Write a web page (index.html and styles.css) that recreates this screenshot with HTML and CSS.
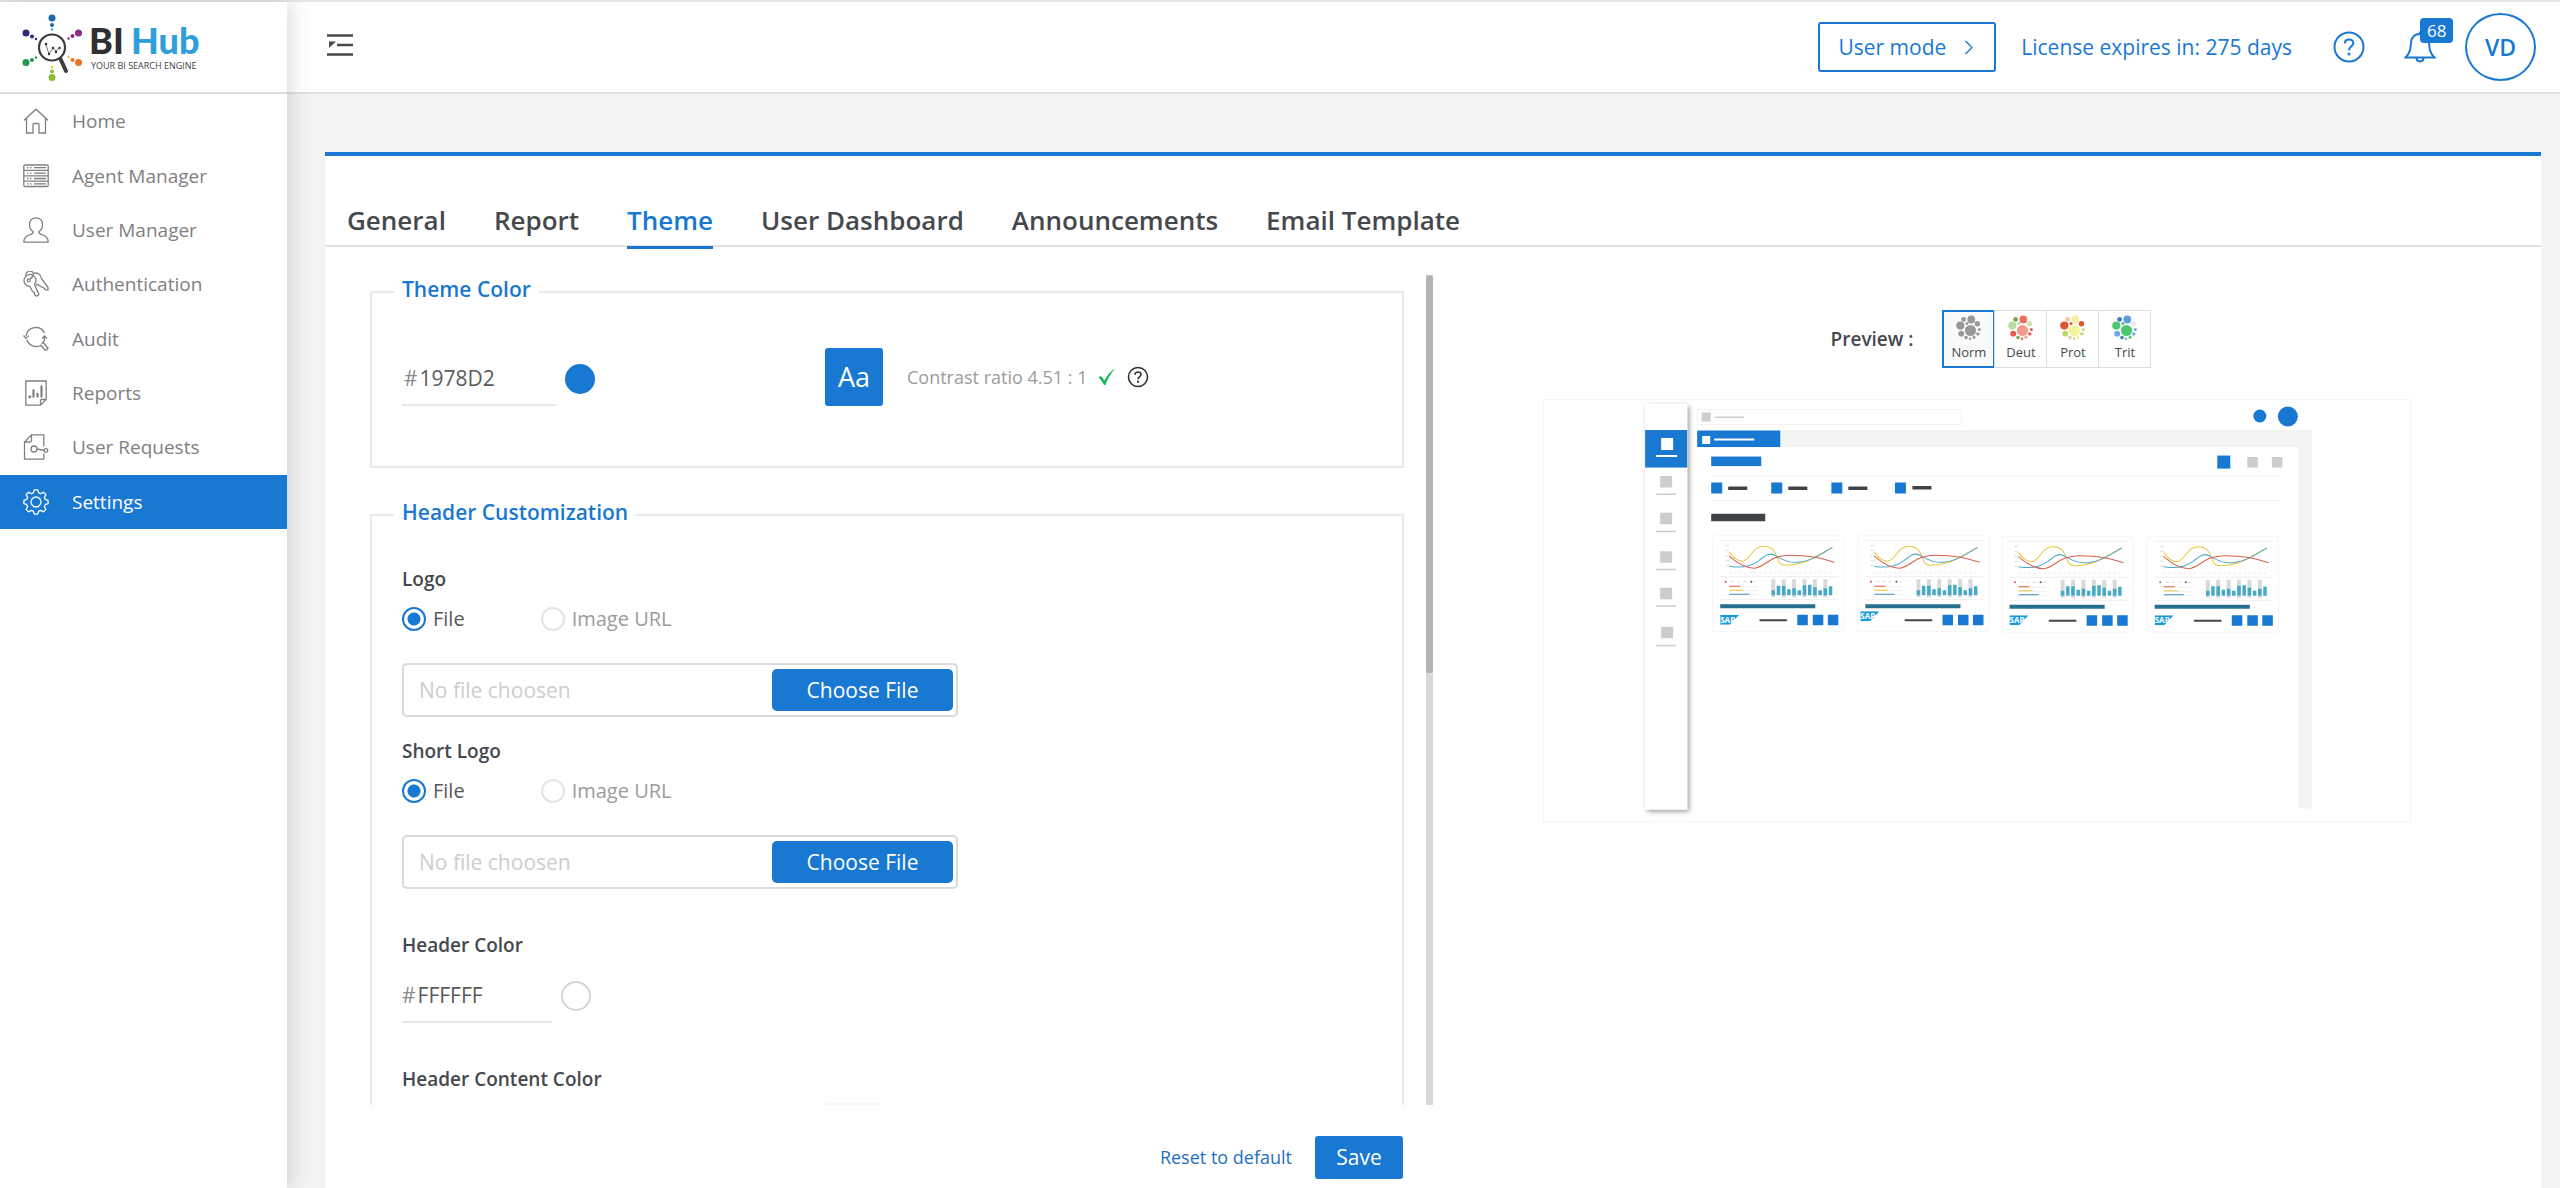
FILE: index.html
```html
<!DOCTYPE html>
<html lang="en">
<head>
<meta charset="utf-8">
<title>BI Hub - Theme settings</title>
<link rel="stylesheet" href="styles.css">
</head>
<body>
<svg class="defs" width="0" height="0" aria-hidden="true">
  <defs>
    <symbol id="dots" viewBox="0 0 26 26">
      <circle cx="14.5" cy="15.5" r="5.6" fill="var(--a)"/>
      <circle cx="15.3" cy="4.5" r="3.9" fill="var(--b)"/>
      <circle cx="7.6" cy="4.4" r="2.4" fill="var(--c)"/>
      <circle cx="4.3" cy="10.6" r="4.1" fill="var(--d)"/>
      <circle cx="5.2" cy="18.7" r="2.9" fill="var(--e)"/>
      <circle cx="11" cy="8.4" r="1.5" fill="var(--d)"/>
      <circle cx="21.4" cy="8.7" r="2.7" fill="var(--f)"/>
      <circle cx="23.4" cy="14.4" r="1.5" fill="var(--e)"/>
      <circle cx="21.8" cy="18.9" r="1.7" fill="var(--e)"/>
      <circle cx="10" cy="22.6" r="1.8" fill="var(--c)"/>
      <circle cx="14" cy="23.7" r="1.2" fill="var(--e)"/>
      <circle cx="18" cy="22.2" r="1.5" fill="var(--a)"/>
    </symbol>
    <symbol id="sap" viewBox="0 0 19 10">
      <path d="M0 0H19L9.500 10H0Z" fill="#1a9bd7"/>
      <text x="0" y="8" class="sap-text">SAP</text>
    </symbol>
    <symbol id="card" viewBox="0 0 132 97">
      <rect x=".5" y=".5" width="131" height="96" rx="2" fill="#fff" stroke="#f3f3f3"/>
      <path d="M8 5.500H126M8 41.500H126M8 64.500H126" stroke="#ededed"/>
      <path d="M13 10.500h4M13 15.500h4M13 20.500h4M13 25.500h4M13 30.500h4" stroke="#ddd"/>
      <path d="M17 37.500H122" stroke="#e6e6e6" stroke-dasharray="2 3"/>
      <g fill="none" stroke-width="1">
        <path d="M17 17C22 23 25 26 30 26C38 26 40 11 51 11C68 11 62 30 72 30C92 30 103 22 120 12" stroke="#e8c63c"/>
        <path d="M17 31C28 33 38 32 46 26C52 21 57 16 64 21C70 24 76 28 86 27C99 26 108 19 120 12.500" stroke="#4aa9c9"/>
        <path d="M17 21C26 29 35 33 42 33C54 32 56 20 78 20C98 20 108 23 122 27" stroke="#d9604b"/>
      </g>
      <path d="M17 51.500H45M17 55.500H45M17 59.500H45" stroke="#eee"/>
      <path d="M19 46.500H36M41 46.500H46" stroke="#e6dcd6" stroke-dasharray="3 3"/>
      <circle cx="13.500" cy="46.500" r="1" fill="#c75b4b"/><circle cx="39" cy="46.500" r="1" fill="#555"/>
      <path d="M17 51H28" stroke="#d9604b"/><path d="M17 55H31" stroke="#e8c63c"/><path d="M17 59H37" stroke="#3b8fc4"/>
      <path d="M61 44V62M71.400 44V62M81.800 44V62M92.200 44V62M102.600 44V62M113 44V62" stroke="#d9d9d9" stroke-width="4"/>
      <path d="M61 55V60M66.200 50.500V60M71.400 50.500V60M76.600 54V60M81.800 53V60M87 55V60M92.200 50V60M97.400 49.500V60M102.600 52V60M107.800 55V60M113 53V60M118.200 51V60" stroke="#45a9c8" stroke-width="3.500"/>
      <rect x="8" y="69" width="95" height="4" fill="#24708e"/>
      <rect x="47" y="84" width="28" height="2" rx="1" fill="#44484c"/>
      <path d="M85 79.500h10.500v10.500h-10.500zM100.500 79.500h10.500v10.500h-10.500zM115.500 79.500h10.500v10.500h-10.500z" fill="#1978d2"/>
    </symbol>
  </defs>
</svg>

<div class="app">
  <aside class="sidebar">
    <a class="brand" href="#" aria-label="BI Hub home">
      <svg width="190" height="72" viewBox="18 12 190 72">
        <g fill="#fff" stroke="#3c3c3e" stroke-width="2.200">
          <path d="M60 58L66 71" stroke-width="4" stroke-linecap="round"/>
          <circle cx="52" cy="47.500" r="13"/>
        </g>
        <path d="M46 45L49 54L53 48L56 51L59 48" fill="none" stroke="#555" stroke-width=".8"/>
        <g fill="#333"><circle cx="46" cy="44" r="1.300"/><circle cx="49" cy="54" r="1.200"/><circle cx="53" cy="48" r="1.200"/><circle cx="56" cy="52" r="1.200"/><circle cx="59.500" cy="48" r="1.200"/></g>
        <g fill="#1b64ae"><circle cx="52" cy="18" r="3.500"/><circle cx="52" cy="25" r="2"/><circle cx="52" cy="29.500" r="1.200" fill="#35a8df"/></g>
        <g fill="#2d2a80"><circle cx="26" cy="33" r="3.500"/><circle cx="32" cy="36.500" r="2"/><circle cx="36" cy="39" r="1.200"/></g>
        <g fill="#8c2d8d"><circle cx="78.500" cy="33" r="3.500"/><circle cx="72.500" cy="36" r="2"/><circle cx="68.500" cy="38.500" r="1.200"/></g>
        <g fill="#1f9a4b"><circle cx="26" cy="62.500" r="3.500"/><circle cx="32" cy="60" r="2"/><circle cx="36" cy="57.500" r="1.200"/></g>
        <g fill="#ec7424"><circle cx="78.500" cy="62.500" r="3.500"/><circle cx="72.500" cy="60" r="2"/><circle cx="68.500" cy="57" r="1.200" fill="#f4b63c"/></g>
        <g fill="#8fbf3a"><circle cx="52" cy="77.500" r="3.500"/><circle cx="52" cy="71.500" r="2"/><circle cx="52" cy="67" r="1.200" fill="#d6d93b"/></g>
        <text x="89" y="54" class="brand-name" fill="#2f2f33">BI</text>
        <text x="131" y="54" class="brand-name" fill="#2e9fdb">Hub</text>
        <text x="91" y="69" class="brand-tag">YOUR BI SEARCH ENGINE</text>
      </svg>
    </a>
    <nav class="menu" aria-label="Main">
      <a href="#"><svg class="ico" viewBox="0 0 26 26"><path d="M.8 12.500L13 1.200L25.200 12.500M3.500 10.500V25H10V16.500Q10 15.500 11 15.500H15Q16 15.500 16 16.500V25H22.500V10.500"/></svg>Home</a>
      <a href="#"><svg class="ico" viewBox="0 0 26 26"><rect x=".8" y="2" width="24.400" height="21.500" rx="1.200"/><path d="M1 7.400H25M1 12.800H25M1 18.200H25M4 4.700h1.500M7 4.700h1.500M11 4.700H23M4 10.100h1.500M7 10.100h1.500M11 10.100H23M4 15.500h1.500M7 15.500h1.500M11 15.500H23M4 20.900h1.500M7 20.900h1.500M11 20.900H23"/></svg>Agent Manager</a>
      <a href="#"><svg class="ico" viewBox="0 0 26 26"><path d="M10 14.500C7.500 13 6.500 10.500 6.500 7.500C6.500 3.500 9 .8 13 .8S19.500 3.500 19.500 7.500C19.500 10.500 18.500 13 16 14.500C15.500 16 16 16.500 18 17.300C22.500 19 25.200 20 25.200 25.200H.8C.8 20 3.500 19 8 17.300C10 16.500 10.500 16 10 14.500Z"/></svg>User Manager</a>
      <a href="#"><svg class="ico" viewBox="0 0 26 26"><path d="M11.500 13.500L16 23.500L13.500 25.200L11.500 23.500V21.500L9.500 20.500L7 15.500A6 6 0 1 1 11.500 13.500Z"/><circle cx="5.800" cy="9.300" r="1.500"/><path d="M3 5.200A4 4 0 0 1 10.500 2.500C14 1 18 3 18.500 7.500L25 16.500V18.800H22.500L20.500 16.500L18.500 16L14.500 13.500L13 13.800M7 7.500Q9.500 7 10.500 3"/></svg>Authentication</a>
      <a href="#"><svg class="ico" viewBox="0 0 26 26"><path d="M3 10A9.800 9.800 0 0 1 21.500 7M3.800 13.500A9.800 9.800 0 0 0 18.500 19M.5 9.500L2.800 12.200L5.800 9.800M19 12.500L21.500 10L24 12.500M21.500 10.500Q21.800 14 20 17.200M18.500 17L20.500 16.800L25 22.300L23.500 24L21.800 23.800L17.800 19"/></svg>Audit</a>
      <a href="#"><svg class="ico" viewBox="0 0 26 26"><path d="M2.800 1H23.200V19.500L17.500 25.200H2.800ZM23 19.500H18.500Q17.500 19.500 17.500 20.500V25"/><path d="M10.500 9.500V17.500M14.500 13V17.500M18.500 5.500V17.500" stroke-width="2.200"/><circle cx="6.800" cy="16.800" r=".9"/></svg>Reports</a>
      <a href="#"><svg class="ico" viewBox="0 0 26 26"><path d="M20.800 12.500V.8H8.500L1.500 8V25.200H20.800V19.500M8.500 1V6Q8.500 8 6.500 8H2M14 15L21.500 16.500"/><circle cx="11" cy="15" r="3"/><circle cx="23" cy="16.500" r="1.800"/></svg>User Requests</a>
      <a href="#" class="on" aria-current="page"><svg class="ico" viewBox="0 0 26 26"><circle cx="13" cy="13" r="5"/><path d="M10.300 3.800L11.300 .9H14.700L15.700 3.800L17.800 4.700L20.400 3.200L22.900 5.600L21.400 8.300L22.200 10.300L25.100 11.300V14.700L22.200 15.700L21.400 17.700L22.900 20.400L20.400 22.900L17.700 21.400L15.700 22.200L14.700 25.100H11.300L10.300 22.200L8.300 21.400L5.600 22.900L3.100 20.400L4.600 17.700L3.800 15.700L.9 14.700V11.300L3.800 10.300L4.600 8.300L3.100 5.600L5.600 3.200L8.300 4.700Z" stroke-linejoin="round"/></svg>Settings</a>
    </nav>
  </aside>

  <div class="page">
    <header class="topbar">
      <button class="icon-btn toggle" type="button" aria-label="Collapse menu">
        <svg width="26" height="24" viewBox="0 0 26 24"><path d="M0 2.500H26M10 12H26M0 21.500H26" stroke="#4a4a4a" stroke-width="2.400"/><path d="M2 8.500H9L2 15Z" fill="#4a4a4a"/></svg>
      </button>
      <button class="mode" type="button">User mode
        <svg width="10" height="15" viewBox="0 0 10 15"><path d="M1.500 1L8 7.500L1.500 14" fill="none" stroke="#1978d2" stroke-width="1.300"/></svg>
      </button>
      <a class="license" href="#">License expires in: 275 days</a>
      <button class="icon-btn help" type="button" aria-label="Help">
        <svg width="32" height="32" viewBox="0 0 32 32" fill="none" stroke="#1978d2" stroke-width="2"><circle cx="16" cy="16" r="14.500"/><path d="M11.800 12.500C11.800 9.800 13.500 8.500 16 8.500S20.300 9.800 20.300 12.200C20.300 15.200 16 15.500 16 19.300"/><circle cx="16" cy="23" r=".6"/></svg>
      </button>
      <button class="icon-btn bell" type="button" aria-label="68 notifications">
        <svg width="32" height="34" viewBox="0 0 32 34" fill="none" stroke="#1978d2" stroke-width="2"><path d="M1.500 27.500C6 23 6.500 20 7 13C7.500 7 11 4 16 4S24.500 7 25 13C25.500 20 26 23 30.500 27.500ZM12.500 28C12.500 32.500 19.500 32.500 19.500 28M16 4V1.500"/></svg>
        <span class="badge">68</span>
      </button>
      <button class="avatar" type="button">VD</button>
    </header>

    <main class="card">
      <nav class="tabs" aria-label="Settings sections">
        <a href="#">General</a><a href="#">Report</a><a href="#" class="on">Theme</a><a href="#">User Dashboard</a><a href="#">Announcements</a><a href="#">Email Template</a>
      </nav>
      <div class="split">
        <form class="settings">
          <div class="scroll">
            <div class="fields">
              <fieldset class="group theme-color">
                <legend>Theme Color</legend>
                <div class="pair">
                  <div class="color">
                    <label class="hex">#<input type="text" value="1978D2" aria-label="Theme color"></label>
                    <button type="button" class="swatch blue" aria-label="Pick theme color"></button>
                  </div>
                  <div class="contrast">
                    <span class="sample">Aa</span>
                    <span class="ratio">Contrast ratio 4.51 : 1</span>
                    <svg width="18" height="18" viewBox="0 0 18 18"><path d="M.5 9.500L3 8L6.500 12.500C8.500 8 12 3.500 17.500 .5C13 5 9.500 10.500 7.500 17H6C4.500 14 2.500 11 .5 9.500Z" fill="#18b85a"/></svg>
                    <button type="button" class="icon-btn" aria-label="About contrast">
                      <svg width="22" height="22" viewBox="0 0 22 22" fill="none" stroke="#333" stroke-width="1.600"><circle cx="11" cy="11" r="9.500"/><path d="M8 8.800C8 6.800 9.200 6 11 6S14 6.900 14 8.500C14 10.800 11 10.800 11 13.300"/><circle cx="11" cy="15.800" r=".4"/></svg>
                    </button>
                  </div>
                </div>
              </fieldset>

              <fieldset class="group header-custom">
                <legend>Header Customization</legend>
                <h3>Logo</h3>
                <div class="radios">
                  <label class="chosen"><input type="radio" name="logo" checked>File</label>
                  <label><input type="radio" name="logo">Image URL</label>
                </div>
                <div class="file">
                  <input type="text" placeholder="No file choosen" aria-label="Logo file" readonly>
                  <button type="button">Choose File</button>
                </div>
                <h3>Short Logo</h3>
                <div class="radios">
                  <label class="chosen"><input type="radio" name="short" checked>File</label>
                  <label><input type="radio" name="short">Image URL</label>
                </div>
                <div class="file">
                  <input type="text" placeholder="No file choosen" aria-label="Short logo file" readonly>
                  <button type="button">Choose File</button>
                </div>
                <h3 class="spaced">Header Color</h3>
                <div class="color">
                  <label class="hex">#<input type="text" value="FFFFFF" aria-label="Header color"></label>
                  <button type="button" class="swatch white" aria-label="Pick header color"></button>
                </div>
                <h3 class="spaced">Header Content Color</h3>
                <div class="pair">
                  <div></div>
                  <div class="contrast"><span class="sample empty"></span></div>
                </div>
              </fieldset>
            </div>
            <div class="track"><div class="thumb"></div></div>
          </div>
          <div class="actions">
            <a href="#">Reset to default</a>
            <button type="submit">Save</button>
          </div>
        </form>

        <section class="preview">
          <div class="modes">
            <strong>Preview :</strong>
            <div class="mode-list">
              <button type="button" class="norm on"><svg width="26" height="26"><use href="#dots"/></svg>Norm</button>
              <button type="button" class="deut"><svg width="26" height="26"><use href="#dots"/></svg>Deut</button>
              <button type="button" class="prot"><svg width="26" height="26"><use href="#dots"/></svg>Prot</button>
              <button type="button" class="trit"><svg width="26" height="26"><use href="#dots"/></svg>Trit</button>
            </div>
          </div>
          <div class="frame">
            <svg viewBox="14 10 865 421" role="img" aria-label="Theme preview">
              <defs><filter id="sh" x="-50%" y="-5%" width="220%" height="110%"><feDropShadow dx="2" dy="2" stdDeviation="2.500" flood-opacity=".4"/></filter></defs>
              <path d="M167 40H781V418H767.500V57H167Z" fill="#f3f3f3"/>
              <rect x="115" y="14" width="42" height="405" fill="#fff" filter="url(#sh)"/>
              <rect x="115" y="40" width="42" height="37.500" fill="#1978d2"/>
              <path d="M131 48h12v12h-12zM126 65h21v2h-21z" fill="#fff"/>
              <g fill="#cdcdcd">
                <path d="M130 86h12v11.500h-12zM130 122.500h12v11.500h-12zM130 161h12v11.500h-12zM130 197.500h12v11.500h-12zM131 236.500h12v11.500h-12z"/>
                <path d="M126 103.500h20v1.500h-20zM126 140.500h20v1.500h-20zM126 178.500h20v1.500h-20zM126 215h20v1.500h-20zM126 254.500h20v1.500h-20z"/>
                <path d="M171.500 22.500h9v9h-9zM185 26.500h29v1.500h-29zM716.500 67h10.500v10.500h-10.500zM741 67h10.500v10.500h-10.500z"/>
              </g>
              <rect x="167.500" y="19.500" width="263" height="15" fill="none" stroke="#f2f2f2"/>
              <g fill="#1978d2">
                <rect x="167" y="40.500" width="83" height="16.500"/>
                <rect x="181" y="66.500" width="50" height="9.500"/>
                <rect x="686.500" y="65.500" width="13" height="13"/>
                <circle cx="729" cy="26" r="6.500"/><circle cx="757" cy="26.500" r="10"/>
                <path d="M181 92.500h11v11h-11zM241 92.500h11v11h-11zM301 92.500h11v11h-11zM364.500 92.500h11v11h-11z"/>
              </g>
              <path d="M172 46h8v8h-8zM184 48.500h40v2h-40z" fill="#fff"/>
              <path d="M181 86H750M181 110.500H750" stroke="#f4f4f4"/>
              <path d="M198 96.500h19v3.500h-19zM258 96.500h19v3.500h-19zM318 96.500h19v3.500h-19zM382 96h19v3.500h-19zM181 123.500h54v7.500h-54z" fill="#3f4347"/>
              <use href="#card" x="182" y="145" width="132" height="97"/>
              <use href="#card" x="327" y="145" width="132" height="97"/>
              <use href="#card" x="471" y="145.500" width="132" height="97"/>
              <use href="#card" x="616" y="145.500" width="132" height="97"/>
              <use href="#sap" x="190" y="224.500" width="19" height="10"/>
              <use href="#sap" x="330" y="221" width="19" height="10"/>
              <use href="#sap" x="479" y="225" width="19" height="10"/>
              <use href="#sap" x="624" y="225" width="19" height="10"/>
            </svg>
          </div>
        </section>
      </div>
    </main>
  </div>
</div>
</body>
</html>
```
FILE: styles.css
```css
* { box-sizing: border-box; }

body {
  margin: 0;
  font-family: "Open Sans", "Noto Sans", sans-serif;
  font-size: 20px;
  line-height: 28px;
  color: #45494d;
  background: #f3f3f3;
}

button, input { font: inherit; color: inherit; }
button { margin: 0; padding: 0; border: 0; background: none; cursor: pointer; }
a { color: inherit; text-decoration: none; }
svg { display: block; flex: none; }
.defs { position: absolute; }
.icon-btn { display: block; }

.app { display: flex; height: 100vh; border-top: 2px solid #e6e6e6; }

/* sidebar */
.sidebar {
  z-index: 1;
  flex: none;
  width: 287px;
  background: #fff;
  box-shadow: 4px 0 20px rgba(0, 0, 0, .14);
}
.brand { display: block; height: 92px; padding: 10px 18px; border-bottom: 2px solid #dcdcdc; }
.brand-name { font: 900 36px Lato, sans-serif; }
.brand-tag { font: 400 9px "Open Sans", sans-serif; fill: #444; }
.menu { display: flex; flex-direction: column; height: 435px; }
.menu a {
  display: flex;
  flex: 1;
  align-items: center;
  gap: 23px;
  padding-left: 23px;
  font-size: 19px;
  color: #7f8082;
}
.menu .on { background: #1978d2; color: #fff; }
.ico { width: 26px; height: 26px; fill: none; stroke: currentColor; stroke-width: 1.3; }

/* top bar */
.page { display: flex; flex: 1; flex-direction: column; min-width: 0; }
.topbar {
  display: flex;
  flex: none;
  align-items: center;
  height: 92px;
  padding: 0 24px 0 40px;
  border-bottom: 2px solid #dfdfdf;
  background: #fff;
  font-size: 21px;
  color: #1978d2;
}
.toggle { margin: 0 auto 4px 0; }
.mode {
  display: flex;
  align-items: center;
  gap: 18px;
  height: 50px;
  margin-right: 25px;
  padding: 0 20px 0 18px;
  border: 2px solid #1978d2;
  border-radius: 3px;
}
.help { margin: 0 39px 0 41px; }
.bell { position: relative; margin-right: 29px; }
.badge {
  position: absolute;
  left: 16px;
  top: -12px;
  padding: 0 7px;
  border-radius: 4px;
  background: #1978d2;
  color: #fff;
  font-size: 17px;
  line-height: 25px;
}
.avatar {
  width: 71px;
  height: 68px;
  border: 2px solid #1978d2;
  border-radius: 50%;
  font-size: 23px;
  font-weight: 600;
}

/* content card */
.card {
  display: flex;
  flex: 1;
  flex-direction: column;
  min-height: 0;
  margin: 58px 19px 0 38px;
  border-top: 4px solid #1978d2;
  background: #fff;
}
.tabs {
  display: flex;
  flex: none;
  gap: 48px;
  height: 91px;
  padding: 44px 22px 0;
  border-bottom: 2px solid #e2e2e2;
  font-size: 26px;
  font-weight: 600;
  line-height: 40px;
}
.tabs a { height: 49px; border-bottom: 3px solid transparent; }
.tabs .on { border-color: #1978d2; color: #1978d2; }

.split { display: grid; flex: 1; grid-template-columns: 1fr 1fr; min-height: 0; }
.settings { display: flex; flex-direction: column; min-width: 0; min-height: 0; padding-top: 28px; }
.scroll { display: flex; flex: 1; gap: 22px; min-height: 0; padding-left: 45px; overflow: hidden; }
.fields { flex: 1; min-width: 0; }
.track { flex: none; width: 7px; background: #d9d9d9; }
.thumb { height: 48%; border-radius: 3px; background: #b4b4b4; }

.group { margin: 0 0 30px; border: 2px solid #e9e9e9; }
.group legend { padding: 0 8px 6px; font-size: 21px; font-weight: 600; color: #1978d2; margin-left: -8px; }
.theme-color { padding: 39px 30px 60px; }
.header-custom { padding: 33px 30px 60px; }
.group h3 { margin: 0 0 12px; font-size: 19px; font-weight: 600; }
.group .spaced { margin: 42px 0 10px; }

.pair { display: grid; grid-template-columns: 423px 1fr; }
.color { display: flex; align-items: center; align-self: end; gap: 9px; height: 54px; }
.hex {
  display: flex;
  align-items: center;
  width: 154px;
  height: 54px;
  padding-left: 2px;
  border-bottom: 2px solid #e8e8e8;
  font-size: 21px;
  color: #8a8a8a;
}
.header-custom .hex { width: 150px; padding-left: 0; }
.hex input { width: 120px; padding: 0 2px; border: 0; outline: 0; background: none; color: #5a5a5a; }
.swatch { width: 30px; height: 30px; border-radius: 50%; }
.swatch.blue { background: #1978d2; }
.swatch.white { border: 2px solid #d6d6d6; background: #fff; }
.contrast { display: flex; align-items: center; gap: 11px; color: #9b9b9b; font-size: 18px; }
.sample {
  width: 58px;
  margin-right: 13px;
  border-radius: 3px;
  background: #1978d2;
  color: #fff;
  font-size: 27px;
  line-height: 58px;
  text-align: center;
}
.sample.empty { height: 58px; border: 2px solid #f6f6f6; background: #fff; }

.radios { display: flex; gap: 76px; margin-bottom: 30px; color: #9b9b9b; }
.radios label { display: flex; align-items: center; gap: 7px; }
.radios .chosen { color: #55595c; }
.radios input {
  appearance: none;
  width: 24px;
  height: 24px;
  margin: 0;
  border: 2px solid #e4e4e4;
  border-radius: 50%;
}
.radios input:checked {
  border-color: #1978d2;
  background: radial-gradient(circle, #1978d2 6px, #fff 7px);
}

.file {
  display: flex;
  width: 556px;
  height: 54px;
  margin-bottom: 20px;
  padding: 4px 3px;
  border: 2px solid #d9d9d9;
  border-radius: 5px;
  font-size: 21px;
}
.file input { flex: 1; min-width: 0; padding: 0 12px; border: 0; outline: 0; background: none; }
.file input::placeholder { color: #cdcdcd; opacity: 1; }
.file button { width: 181px; border-radius: 5px; background: #1978d2; color: #fff; }

.actions {
  display: flex;
  flex: none;
  align-items: start;
  justify-content: flex-end;
  gap: 23px;
  height: 83px;
  padding: 31px 30px 0 0;
  font-size: 18px;
  line-height: 43px;
  color: #1f6fbf;
}
.actions button { width: 88px; border-radius: 3px; background: #1978d2; color: #fff; font-size: 21px; }

/* preview */
.preview { min-width: 0; padding: 63px 130px 0 110px; }
.modes { display: flex; align-items: center; justify-content: center; gap: 30px; padding-left: 28px; font-size: 19px; }
.modes strong { font-weight: 600; }
.mode-list { display: flex; }
.mode-list button {
  display: flex;
  flex-direction: column;
  align-items: center;
  width: 53px;
  height: 58px;
  margin-left: -1px;
  padding-top: 4px;
  border: 1px solid #dedede;
  font-size: 13px;
  line-height: 22px;
}
.mode-list .on { border: 2px solid #1978d2; padding-top: 3px; background: #fafafa; }
.norm { --a: #999; --b: #999; --c: #999; --d: #999; --e: #999; --f: #999; }
.deut { --a: #f49a8f; --b: #ee6e5f; --c: #7da94a; --d: #b9dba6; --e: #e5584a; --f: #cbe0b4; }
.prot { --a: #f5f49c; --b: #f3efa0; --c: #f3c792; --d: #e2572f; --e: #bfd96e; --f: #e2572f; }
.trit { --a: #4cc76f; --b: #5c9cdd; --c: #3d7cc8; --d: #4cc76f; --e: #6ea8e2; --f: #ececec; }
.frame { margin-top: 31px; border: 1px solid #f4f4f4; }
.frame svg { width: 100%; height: auto; }
.sap-text { font: 700 8px "Open Sans", sans-serif; fill: #fff; }
```
